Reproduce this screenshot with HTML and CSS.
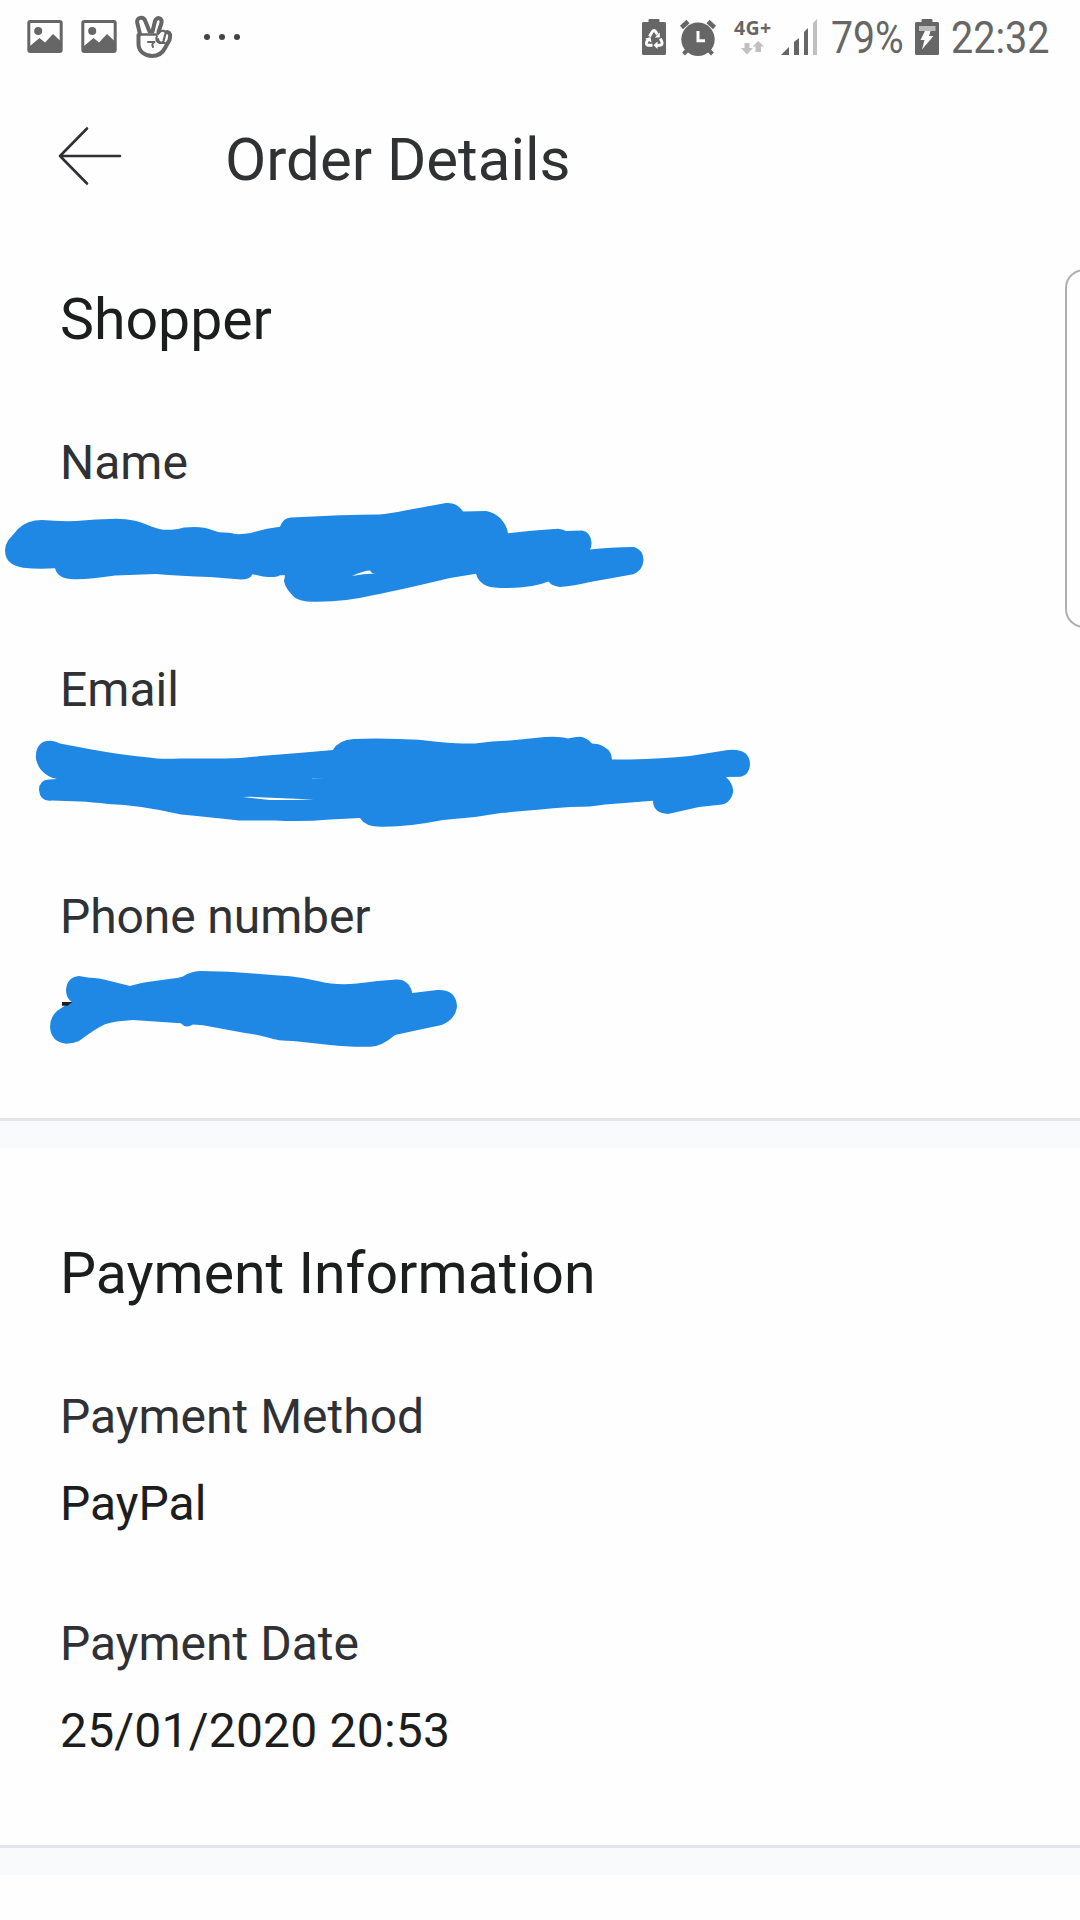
FILE: index.html
```html
<!DOCTYPE html>
<html lang="en">
<head>
<meta charset="utf-8">
<title>Order Details</title>
<link rel="stylesheet" href="styles.css">
</head>
<body>
<div class="screen">
  <div class="status-bar">
    <div class="notifications">
      <svg class="icon" width="36" height="34" viewBox="27 20 36 34"><rect x="28.8" y="21.5" width="32.4" height="30" rx="1.5" fill="none" stroke="#666" stroke-width="3"/><circle cx="38.2" cy="31" r="4"/><path d="M30 46l9.500-8 5.500 4.500 8-8.500 7.500 7V52H30z"/></svg>
      <svg class="icon" width="36" height="34" viewBox="27 20 36 34"><rect x="28.8" y="21.5" width="32.4" height="30" rx="1.5" fill="none" stroke="#666" stroke-width="3"/><circle cx="38.2" cy="31" r="4"/><path d="M30 46l9.500-8 5.500 4.500 8-8.500 7.500 7V52H30z"/></svg>
      <svg class="icon hand" width="38" height="44" viewBox="135 15 38 44"><g fill="none" stroke="#666" stroke-width="4" stroke-linejoin="round" stroke-linecap="round"><path d="M140 34L137.300 23C136 17 143.500 16 145.300 21L149.500 31.500H152.500L155 21C157 15.800 163 18 161.200 24L158.500 32"/><path d="M138.500 35V44C138.500 51.500 145 56 152 56C158 56 162.500 53 165 48L169.500 40C170.500 36 171 33 167 32"/><path d="M140 34.500H156" stroke-width="2.600"/><path d="M158 34C160 30 166 29.500 165.500 33.500L163.500 41C162.500 44 158 42.500 158 39" stroke-width="2.200"/><path d="M148 42H154.500C152 43 152 45 153 47M157 36C155 39 157 42 159.500 43L165 43" stroke-width="2"/></g></svg>
      <svg class="icon dots" width="38" height="8" viewBox="0 0 38 8"><circle cx="4" cy="4" r="3"/><circle cx="19" cy="4" r="3"/><circle cx="34" cy="4" r="3"/></svg>
    </div>
    <div class="system">
      <svg class="icon" width="24" height="36" viewBox="642 19 24 36"><path d="M648.500 22v-2q0-1 1-1h9q1 0 1 1v2h5q1.500 0 1.500 1.500v30q0 1.500-1.500 1.500h-21q-1.500 0-1.500-1.500v-30q0-1.500 1.500-1.500z"/><g fill="none" stroke="#fff" stroke-width="2.900"><path d="M649.500 36.500l2.700-4.700q1.800-2.600 3.600 0l1.600 2.700"/><path d="M660.300 38.500l1.500 3q1.200 3.500-2 3.800h-3"/><path d="M652.500 45.300h-4q-3-.3-1.800-3.300l1.800-3.200"/></g><path fill="#fff" d="M659.800 32.500v5h-5zM657.500 41.500v7.500l-4-3.700zM645 38.700l5.500-1.700 1 5.500z"/></svg>
      <svg class="icon alarm" width="36" height="37" viewBox="680 18 36 37"><circle cx="698" cy="38.300" r="16.700"/><path d="M681.500 26.500l6.500-6M714.500 26.500l-6.500-6" stroke="#666" stroke-width="4.500"/><path d="M687.500 49l-4 4M708.500 49l4 4" stroke="#666" stroke-width="4"/><path d="M698 30v9.700h7" fill="none" stroke="#fff" stroke-width="3"/></svg>
      <div class="network">
        <span class="network-label">4G+</span>
        <svg class="icon" width="38" height="14" viewBox="734 41 38 14"><path fill="#c0c0c0" d="M744.500 43h5v5h3.500l-6 6.500-6-6.500h3.500zM755.500 52h5.500v-5.500h3l-5.700-5.500-5.800 5.500h3z"/></svg>
      </div>
      <svg class="icon signal" width="37" height="37" viewBox="781 18 37 37"><path d="M781 54l8-8v8zM794 54V41l5-4v17zM804 54V31l4-4v27z"/><path fill="#c0c0c0" d="M813 54V22l4-4v36z"/></svg>
      <span class="clock percent">79%</span>
      <svg class="icon battery" width="24" height="36" viewBox="915 19 24 36"><path d="M921.500 22v-2q0-1 1-1h9q1 0 1 1v2h5q1.500 0 1.500 1.500v30q0 1.500-1.500 1.500h-21q-1.500 0-1.500-1.500v-30q0-1.500 1.500-1.500z"/><path fill="#bbb" d="M919 26h16.500v5H919z"/><path fill="#fff" d="M925 31h5.500l-1.500 5h4.500l-11.500 13.500 2.500-9.500h-4z"/></svg>
      <span class="clock time">22:32</span>
    </div>
  </div>

  <header class="header">
    <svg class="back" width="64" height="60" viewBox="0 0 64 60" fill="none" stroke="#2f3033" stroke-width="2.600" stroke-linecap="round" stroke-linejoin="round"><path d="M29 2.500L2 30l27 27.500M2 30h60"/></svg>
    <h1 class="title">Order Details</h1>
  </header>

  <section class="section shopper">
    <h2 class="heading">Shopper</h2>
    <dl class="fields">
      <div class="field"><dt>Name</dt><dd></dd></div>
      <div class="field"><dt>Email</dt><dd></dd></div>
      <div class="field"><dt class="phone">Phone number</dt><dd></dd></div>
    </dl>
    <svg class="marker" width="1080" height="871" viewBox="0 247 1080 871">
      <path d="M5 550Q5 545 8.400 540L18 529Q27 520 42 520Q58 521.500 76 521Q96 519 116 518.700Q126 518.700 135 520.700C149 524 156 531 172 529.700Q178 529.500 184 527.500Q202 525.500 212 530L219 532.300Q230 532.500 235 534Q242 534.500 251 533Q266 528 280 526.700Q283 518 291 517.500L340 515.300Q362 514.500 379 514.500Q390 513.500 405 510.500L446 503Q457 502 463 511.500L486 511Q494 512 501 519Q507 526 508 533.300Q530 530.500 558 528.700Q562 529 566 531L582 530.500Q591 532 591.500 543Q591.500 547 590 549.500Q610 547 634 547Q643.500 550 643.500 560Q643 570 633.400 574.300L590 582Q574 586 560 587Q552 586 548.400 581.500Q533 588 507 588Q492 588 487 586Q478 582 476 573.700L450 578Q400 590 374 595Q345 602 315 601.700Q300 602 294 597Q285 588 284 581L285 575.300L280 575.300Q277 578 263 576.500L252.500 574.300Q250 579.500 241 579.500L210 577Q180 576 156 574L115 575.500Q92 579 76 579.300Q58 580 55 568.300Q38 569.500 23 567.700Q5 565 5 550Z"/>
      <path class="gap" d="M352 576Q364 570.500 370 570.500L372 573L375 573.500Q363 573.500 352 576Z"/>
      <path d="M35.800 757Q36 741 50 740.800Q54 740.500 60 743.500L89 749Q121 755 149 757.500Q160 759.500 180 758.500H219Q240 759 260 756Q300 753 333 750Q338 740 354 739Q376 738 398 739Q419 739 439 742Q462 744 475 743.500Q492 741 510 740.500L545 737Q560 736 568 738.500Q579 736 583 737.200Q588 739 592 743.500Q606 744 611 754L612 759.500H630Q662 758.500 690 756L728 750Q750 748 750 765Q749 775 741 776.700L726 777Q736 787 732 796Q729 803 722 804.500L699 807L668 814Q653 813 653 800.700L605 804.500Q592 807 570 807Q532 810 501 813L475 817L443 820Q408 827 382 826.700Q365 827 360 818L330 819.500Q303 822 275 820.500H239Q207 817 181 814.500Q140 805 108 804Q92 802 80 801.500L52 800.500Q40 802 39 790Q39 780 49 779.500L57 779Q47 777 41 770Q36 763 35.800 757Z"/>
      <path class="gap" d="M243 797Q247 796.800 251 796.800L277 798L314 799.500L292 800H270Q260 799 247 797.500ZM312 778L325 778.300H312Z"/>
      <path d="M50 1027Q50 1017 57 1011Q63 1006 72 1002.300Q66 998 66 990Q67 977 79 976L88 977.500Q100 978 108 980.500L130 986Q136 984 144 982.500L169 979Q178 978 183 976.500Q190 971.500 200 971L229 971.700Q262 974 290 976.300Q306 978 320 981.500Q336 985.500 357 983.500Q379 980.500 396 979.500Q409 979 412.300 993L437 990Q456 989 457 1006Q456 1019 441.700 1025L418 1030L395 1035Q381 1047 370 1046.700Q347 1047 330 1045L293 1041Q278 1041 268 1037.500Q255 1034 245 1033L203 1025.300L193 1024.500Q186 1029 180.700 1023.300L133 1020Q115 1021 105 1024.300Q95 1029 79 1041Q73 1043.500 66 1043.700Q51 1042 50 1027Z"/>
      <path class="ink" d="M62 1002h10.500l-5 3.800H62z"/>
    </svg>
  </section>

  <section class="section payment">
    <h2 class="heading">Payment Information</h2>
    <dl class="fields">
      <div class="field"><dt>Payment Method</dt><dd>PayPal</dd></div>
      <div class="field"><dt>Payment Date</dt><dd class="date">25/01/2020 20:53</dd></div>
    </dl>
  </section>
  <div class="edge-panel"></div>
</div>
</body>
</html>
```
FILE: styles.css
```css
* {
  box-sizing: border-box;
}

body {
  margin: 0;
  background: #fefefe;
  font-family: Roboto, "Liberation Sans", sans-serif;
}

.screen {
  position: relative;
  width: 1080px;
  height: 1920px;
  overflow: hidden;
}

.status-bar {
  display: flex;
  justify-content: space-between;
  height: 72px;
  padding: 0 30px 0 27px;
}

.notifications,
.system {
  display: flex;
  align-items: center;
  height: 74px;
}

.notifications {
  gap: 18px;
}

.icon {
  display: block;
  flex: none;
  fill: #666;
}

.dots {
  margin-left: 12px;
  fill: #444;
}

.alarm {
  margin-left: 14px;
}

.network {
  display: flex;
  flex-direction: column;
  width: 38px;
  margin-left: 18px;
}

.network-label {
  height: 22px;
  color: #666;
  font: bold 19.500px/18px "Open Sans", sans-serif;
  letter-spacing: 0.400px;
  white-space: nowrap;
}

.signal {
  margin-left: 9px;
}

.clock {
  color: #666;
  font-size: 45px;
  line-height: 53px;
  white-space: nowrap;
  transform: scaleX(0.87);
  transform-origin: left;
}

.percent {
  width: 71px;
  margin-left: 13px;
}

.battery {
  margin-left: 13px;
}

.time {
  width: 99px;
  margin-left: 12px;
  transform: scaleX(0.88);
}

.header {
  display: flex;
  align-items: center;
  height: 175px;
  padding-left: 58px;
}

.back {
  margin-top: -7px;
}

.title {
  margin: 0 0 0 103px;
  color: #303133;
  font-size: 60px;
  font-weight: 400;
  line-height: 70px;
}

.section {
  position: relative;
  padding-left: 60px;
  border-bottom: 27px solid #f8fafc;
}

.section::after {
  content: "";
  position: absolute;
  right: 0;
  bottom: 0;
  left: 0;
  height: 3px;
  background: #e4e5ea;
}

.shopper {
  height: 901px;
  padding-top: 40px;
}

.payment {
  height: 727px;
  padding-top: 93px;
}

.heading {
  margin: 0 0 82px;
  color: #1c1d1d;
  font-size: 57.200px;
  font-weight: 400;
  line-height: 66px;
}

.fields {
  display: grid;
  gap: 84px;
  margin: 0;
}

.field {
  display: grid;
  grid-template-rows: 56px 56px;
  gap: 31px;
  color: #303135;
  font-size: 48px;
  line-height: 56px;
}

.field dd {
  margin: 0;
  color: #1c1d1d;
}

.field .phone {
  letter-spacing: -0.100px;
}

.field .date {
  letter-spacing: 0.200px;
}

.marker {
  position: absolute;
  top: 0;
  left: 0;
  fill: #1f88e5;
}

.marker .gap {
  fill: #fefefe;
}

.marker .ink {
  fill: #1c1d1d;
}

.edge-panel {
  position: absolute;
  top: 269px;
  left: 1065px;
  width: 40px;
  height: 359px;
  border: 2px solid #b0b0b0;
  border-radius: 19px;
}
```
